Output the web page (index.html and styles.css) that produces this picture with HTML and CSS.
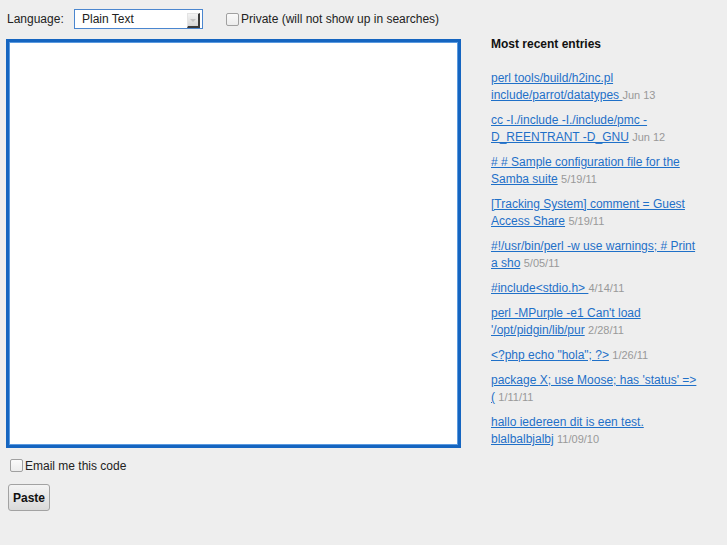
FILE: index.html
```html
<!DOCTYPE html>
<html>
<head>
<meta charset="utf-8">
<link rel="stylesheet" href="styles.css">
</head>
<body>
<div class="page">
  <form class="main">
    <div class="toprow">
      <label class="lang-label">Language:</label>
      <div class="select-wrap">
        <select class="lang"><option>Plain Text</option></select>
        <span class="arrow"></span>
      </div>
      <label class="check private"><input type="checkbox" class="cb">Private (will not show up in searches)</label>
    </div>
    <textarea class="code"></textarea>
    <label class="check email"><input type="checkbox" class="cb">Email me this code</label>
    <button type="button" class="paste">Paste</button>
  </form>
  <aside class="recent">
    <h3>Most recent entries</h3>
    <ul>
      <li><a href="#">perl tools/build/h2inc.pl include/parrot/datatypes </a><span class="date">Jun 13</span></li>
      <li><a href="#">cc -I./include -I./include/pmc -D_REENTRANT -D_GNU</a> <span class="date">Jun 12</span></li>
      <li><a href="#"># # Sample configuration file for the Samba suite</a> <span class="date">5/19/11</span></li>
      <li><a href="#">[Tracking System] comment = Guest Access Share</a> <span class="date">5/19/11</span></li>
      <li><a href="#">#!/usr/bin/perl -w use warnings; # Print a sho</a> <span class="date">5/05/11</span></li>
      <li><a href="#">#include&lt;stdio.h&gt; </a> <span class="date">4/14/11</span></li>
      <li><a href="#">perl -MPurple -e1 Can't load '/opt/pidgin/lib/pur</a> <span class="date">2/28/11</span></li>
      <li><a href="#">&lt;?php echo "hola"; ?&gt;</a> <span class="date">1/26/11</span></li>
      <li><a href="#">package X; use Moose; has 'status' =&gt; (</a> <span class="date">1/11/11</span></li>
      <li><a href="#">hallo iedereen dit is een test. blalbalbjalbj</a> <span class="date">11/09/10</span></li>
    </ul>
  </aside>
</div>
</body>
</html>
```
FILE: styles.css
```css
html, body {
  margin: 0;
  padding: 0;
  background: #eeeeee;
}
body {
  font-family: "Liberation Sans", Arial, sans-serif;
  font-size: 12px;
  color: #222;
}
.page {
  display: flex;
  padding: 8px 0 0 6px;
  gap: 30px;
}
.main {
  display: flex;
  flex-direction: column;
  width: 455px;
}
.toprow {
  display: flex;
  align-items: center;
  height: 20px;
  padding-top: 1px;
  margin-bottom: -1px;
}
.lang-label {
  margin-left: 1px;
  width: 67px;
}
.select-wrap {
  position: relative;
  width: 129px;
  height: 20px;
  margin-top: -1px;
}
.lang {
  appearance: none;
  -webkit-appearance: none;
  width: 129px;
  height: 20px;
  margin: 0;
  border: 1px solid #4a86cf;
  background: #fff;
  font-family: "Liberation Sans", Arial, sans-serif;
  font-size: 12px;
  color: #222;
  padding: 1px 0 0 7px;
  outline: none;
  border-radius: 0;
}
.arrow {
  position: absolute;
  right: 3px;
  top: 4px;
  width: 13px;
  height: 15px;
  background: linear-gradient(#f4f4f4, #d6d6d6);
  border-top: 1px solid #e4e4e4;
  border-left: 1px solid #e4e4e4;
  border-right: 2px solid #3a3a3a;
  border-bottom: 2px solid #3a3a3a;
  box-sizing: border-box;
  pointer-events: none;
}
.arrow::after {
  content: "";
  position: absolute;
  left: 2px;
  top: 5px;
  border-left: 3px solid transparent;
  border-right: 3px solid transparent;
  border-top: 3px solid #c4c4c4;
}
.check {
  display: flex;
  align-items: center;
}
.private {
  margin-left: 23px;
}
.cb {
  appearance: none;
  -webkit-appearance: none;
  width: 13px;
  height: 13px;
  margin: 0 2px 0 0;
  border: 1px solid #a0a0a0;
  border-radius: 2px;
  background: linear-gradient(#fafafa, #ececec);
  box-sizing: border-box;
}
.code {
  margin: 11px 0 0 0;
  width: 455px;
  height: 409px;
  box-sizing: border-box;
  border: 3px solid #1565c0;
  box-shadow: inset 0 0 0 1px #5a9ae0;
  background: #fff;
  resize: none;
  outline: none;
  padding: 2px;
}
.email {
  margin: 11px 0 0 4px;
  height: 13px;
}
.paste {
  margin: 12px 0 0 2px;
  width: 42px;
  height: 27px;
  align-self: flex-start;
  border: 1px solid #a2a2a2;
  border-radius: 3px;
  background: linear-gradient(#f4f4f4, #d9d9d9);
  font-family: "Liberation Sans", Arial, sans-serif;
  font-weight: bold;
  font-size: 12px;
  color: #111;
  padding: 0;
}
.recent {
  width: 208px;
  padding-top: 29px;
}
.recent h3 {
  margin: 0 0 18px 0;
  font-size: 12px;
  font-weight: bold;
  color: #111;
  line-height: 15px;
}
.recent ul {
  list-style: none;
  margin: 0;
  padding: 0;
  display: flex;
  flex-direction: column;
  gap: 8px;
}
.recent li {
  font-size: 12px;
  line-height: 17px;
}
.recent a {
  color: #1f70c8;
  text-decoration: underline;
}
.date {
  color: #999;
  font-size: 11px;
  line-height: 1;
}
```
